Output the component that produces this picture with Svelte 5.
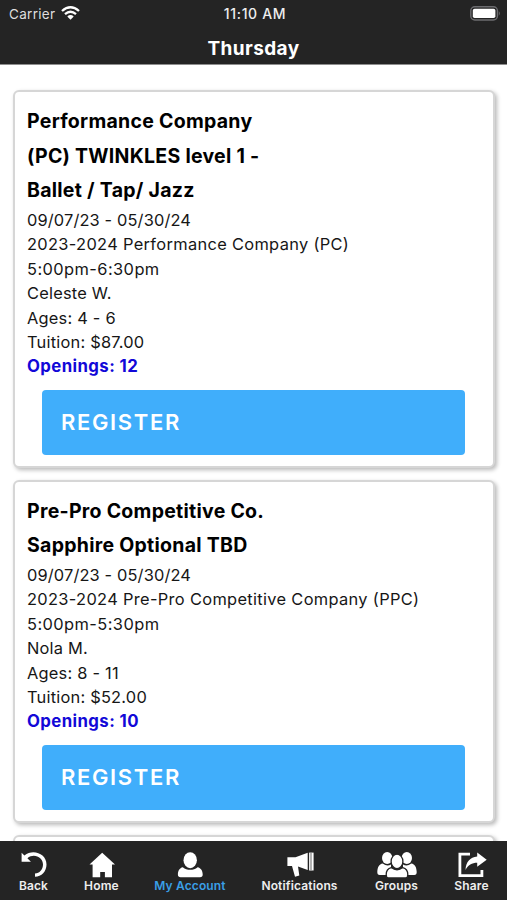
<script lang="ts">
  type ClassItem = {
    title: string[]
    dates: string
    session: string
    time: string
    teacher: string
    ages: string
    tuition: string
    openings: number
  }

  const classes: ClassItem[] = [
    {
      title: ['Performance Company', '(PC) TWINKLES level 1 -', 'Ballet / Tap/ Jazz'],
      dates: '09/07/23 - 05/30/24',
      session: '2023-2024 Performance Company (PC)',
      time: '5:00pm-6:30pm',
      teacher: 'Celeste W.',
      ages: '4 - 6',
      tuition: '$87.00',
      openings: 12
    },
    {
      title: ['Pre-Pro Competitive Co.', 'Sapphire Optional TBD'],
      dates: '09/07/23 - 05/30/24',
      session: '2023-2024 Pre-Pro Competitive Company (PPC)',
      time: '5:00pm-5:30pm',
      teacher: 'Nola M.',
      ages: '8 - 11',
      tuition: '$52.00',
      openings: 10
    }
  ]

  const tabs = ['Back', 'Home', 'My Account', 'Notifications', 'Groups', 'Share']
  let active = $state('My Account')
</script>

<div class="screen">
  <header>
    <div class="status">
      <div class="carrier">
        <span>Carrier</span>
        <svg width="19" height="14" viewBox="0 0 19 14">
          <g fill="none" stroke="#fff" stroke-width="2.3">
            <path d="M1 5Q9.5-2.6 18 5" />
            <path d="M4 8.2Q9.5 3.3 15 8.2" />
          </g>
          <path d="M6.3 10.4Q9.5 7.8 12.7 10.4L9.5 13.7z" fill="#fff" />
        </svg>
      </div>
      <span class="clock">11:10 AM</span>
      <svg class="battery" width="31" height="15" viewBox="0 0 31 15">
        <rect x="0.8" y="0.8" width="26.6" height="13.2" rx="4" fill="none" stroke="#6c6c6f" stroke-width="1.4" />
        <rect x="2.8" y="2.8" width="22.6" height="9.2" rx="1.8" fill="#fff" />
        <path d="M28.8 5.1q2 2.3 0 4.6z" fill="#6c6c6f" />
      </svg>
    </div>
    <h1>Thursday</h1>
  </header>

  <main>
    {#each classes as item}
      <article class="card">
        <h2>
          {#each item.title as line}
            <span>{line}</span>
          {/each}
        </h2>
        <div class="details">
          <p class="dates">{item.dates}</p>
          <p>{item.session}</p>
          <p class="time">{item.time}</p>
          <p class="short">{item.teacher}</p>
          <p class="short">Ages: {item.ages}</p>
          <p class="short">Tuition: {item.tuition}</p>
          <p class="openings">Openings: {item.openings}</p>
        </div>
        <button class="register">REGISTER</button>
      </article>
    {/each}
    <article class="card next"></article>
  </main>

  <nav>
    {#each tabs as tab}
      <button class="tab" class:active={tab === active} onclick={() => (active = tab)}>
        <svg width="40" height="27" viewBox="0 0 40 27" fill="#fff">
          {#if tab === 'Back'}
            <path d="M7.6 1.8L10.4 4.4C19.5 -2.5 32.5 3 32.5 13.5C32.5 20.5 27.5 25.8 21 25.8V22.4C25.5 22.4 29 18.5 29 13.5C29 6.3 20 1.8 13.4 7.2L16.9 10.8H7.6z" />
          {:else if tab === 'Home'}
            <path d="M20.2 1.7L33 13.6H30V26.3H22.9V21H18.2V26.3H10.6V13.6H7.5z" />
          {:else if tab === 'My Account'}
            <ellipse cx="20.2" cy="9.2" rx="6.7" ry="8" />
            <path d="M12.8 16.2C17 19.7 23.4 19.7 27.6 16.2C31 16.8 32.7 20 32.7 23.5Q32.7 26.3 30 26.3H10.6Q7.9 26.3 7.9 23.5C7.9 20 9.5 16.8 12.8 16.2z" />
          {:else if tab === 'Notifications'}
            <path d="M7.4 6.2H15.5L27.7 1.8V19L18 15.4L19.3 24.6L15 25.8L12 15H7.4z" />
            <path d="M29.1 1.6H33.6V19.5H29.1z" />
            <path d="M31 2V19" stroke="#242424" stroke-width="0.7" />
          {:else if tab === 'Groups'}
            <g>
              <ellipse cx="10.2" cy="7" rx="5.2" ry="6" />
              <ellipse cx="29.8" cy="7" rx="5.2" ry="6" />
              <path d="M5.7 12.5Q10 16 14 13.5V24H2.7Q0.2 24 0.3 21C0.5 16 2 13.2 5.7 12.5z" />
              <path d="M34.3 12.5Q30 16 26 13.5V24H37.3Q39.8 24 39.7 21C39.5 16 38 13.2 34.3 12.5z" />
            </g>
            <g stroke="#242424" stroke-width="1.3">
              <path d="M14.3 16.6Q20 21 25.7 16.6C29.3 17.5 30.8 20 30.8 23.5Q30.8 27 28.5 27H11.5Q9.2 27 9.2 23.5C9.2 20 10.7 17.5 14.3 16.6z" />
              <ellipse cx="20" cy="10.4" rx="5.9" ry="7.2" />
            </g>
          {:else}
            <path d="M18 3.2H7.9V24.7H29.9V19" fill="none" stroke="#fff" stroke-width="2.8" />
            <path d="M25.2 1.5L34.7 8.7L25.2 15.8V11.8C20 11.8 16 14.3 13.5 19C14 11 18 6.3 25.2 5.6z" />
          {/if}
        </svg>
        <span>{tab}</span>
      </button>
    {/each}
  </nav>
</div>

<style>
  :global(body) {
    overflow: hidden;
  }

  .screen {
    display: flex;
    flex-direction: column;
    height: 900px;
    overflow: hidden;
    background: #fff;
    color: #000;
    font-family: Inter, 'Liberation Sans', sans-serif;
  }

  header {
    flex: none;
    box-sizing: border-box;
    height: 65px;
    background: #242424;
    border-bottom: 1px solid #8e8e8e;
    color: #fff;
  }

  .status {
    display: grid;
    grid-template-columns: 1fr auto 1fr;
    align-items: center;
    height: 28px;
    padding: 0 6px 0 9px;
    font-size: 13.5px;
  }

  .carrier {
    display: flex;
    align-items: center;
    gap: 6px;
    color: #dedede;
    letter-spacing: 0.3px;
  }

  .carrier svg {
    margin-top: -2px;
  }

  .clock {
    font-size: 14px;
    font-weight: 500;
    letter-spacing: 0.65px;
    line-height: 16px;
    margin-top: -1px;
    color: #eee;
  }

  .battery {
    justify-self: end;
    margin-top: -1px;
  }

  h1 {
    margin: 0;
    text-align: center;
    font-size: 19px;
    font-weight: 700;
    line-height: 41px;
    letter-spacing: 0.4px;
  }

  main {
    flex: 1;
    min-height: 0;
    display: flex;
    flex-direction: column;
    gap: 12px;
    padding: 25.4px 12px 0 13px;
    overflow: hidden;
  }

  .card {
    flex: none;
    box-sizing: border-box;
    padding: 12px 12px 11.2px;
    border: 2px solid #d6d6d6;
    border-radius: 6px;
    background: #fff;
    box-shadow: 2px 2px 4px rgba(0, 0, 0, 0.28);
  }

  .next {
    height: 60px;
  }

  h2 {
    margin: 0 0 0.9px;
    font-size: 19.5px;
    font-weight: 700;
    line-height: 34.2px;
    letter-spacing: 0.27px;
  }

  h2 span {
    display: block;
  }

  .details {
    font-size: 16.4px;
    line-height: 24.4px;
    letter-spacing: 0.33px;
    color: #161616;
  }

  p {
    margin: 0;
  }

  .dates {
    letter-spacing: 0.14px;
  }

  .time {
    letter-spacing: 0.43px;
  }

  .short {
    letter-spacing: 0.22px;
  }

  .openings {
    font-size: 16.8px;
    font-weight: 700;
    color: #1208d8;
    letter-spacing: 0.4px;
  }

  .register {
    display: block;
    width: calc(100% - 31px);
    height: 65px;
    margin: 10.8px 0 0 15px;
    padding: 0 19px;
    border: none;
    border-radius: 4px;
    background: #40aefb;
    color: #fff;
    font: 600 22px Inter, 'Liberation Sans', sans-serif;
    letter-spacing: 1.65px;
    text-align: left;
  }

  nav {
    flex: none;
    display: grid;
    grid-template-columns: 67px 69px 108px 111px 83px 67px;
    height: 59px;
    background: #242424;
  }

  .tab {
    display: flex;
    flex-direction: column;
    align-items: center;
    padding: 10px 0 0;
    border: none;
    background: none;
    color: #eee;
    font: 600 12px/16px Inter, 'Liberation Sans', sans-serif;
    letter-spacing: 0.15px;
    white-space: nowrap;
  }

  .active {
    color: #3a9fe6;
  }
</style>
